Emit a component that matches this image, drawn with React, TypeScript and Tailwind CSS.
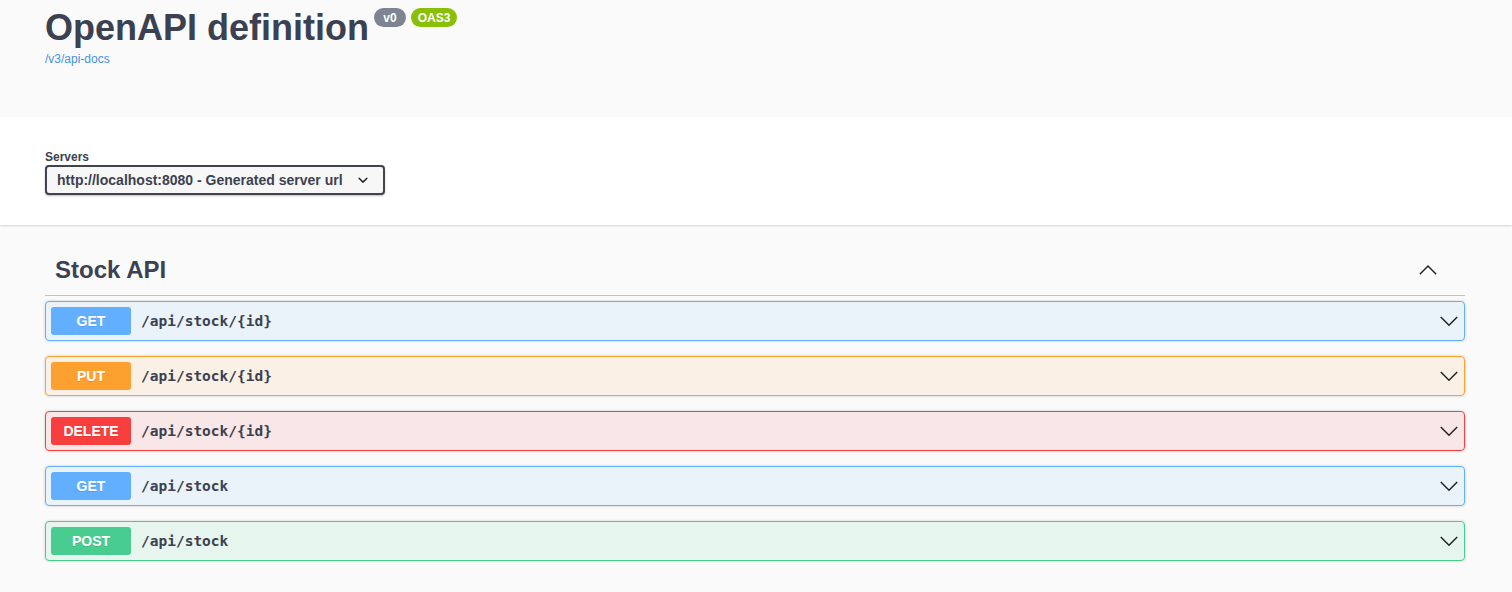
import React from "react";

const ops = [
  { m: "GET", p: "/api/stock/{id}", c: "#61affe", bg: "rgba(97,175,254,0.1)" },
  { m: "PUT", p: "/api/stock/{id}", c: "#fca130", bg: "rgba(252,161,48,0.1)" },
  { m: "DELETE", p: "/api/stock/{id}", c: "#f93e3e", bg: "rgba(249,62,62,0.1)" },
  { m: "GET", p: "/api/stock", c: "#61affe", bg: "rgba(97,175,254,0.1)" },
  { m: "POST", p: "/api/stock", c: "#49cc90", bg: "rgba(73,204,144,0.1)" },
];

function ArrowDown() {
  return (
    <svg width="20" height="20" viewBox="0 0 20 20" className="shrink-0">
      <polyline points="1.8,6 10,14.3 18.2,6" fill="none" stroke="#222" strokeWidth="1.5" />
    </svg>
  );
}

function ArrowUp() {
  return (
    <svg width="20" height="20" viewBox="0 0 20 20" className="shrink-0">
      <polyline points="1.8,14.3 10,6 18.2,14.3" fill="none" stroke="#222" strokeWidth="1.5" />
    </svg>
  );
}

export default function App() {
  const sans = { fontFamily: '"Liberation Sans", Arial, sans-serif' };
  return (
    <div className="min-h-[592px] bg-[#fafafa] text-[#3b4151]" style={sans}>
      {/* Info */}
      <div className="h-[117px] bg-[#fafafa]">
        <div className="ml-[25px] w-[1460px] px-5 pt-[8px]">
          <div className="flex items-start">
            <h2 className="m-0 text-[36px] font-bold leading-[40px] text-[#3b4151]">OpenAPI definition</h2>
            <span className="ml-[5px] flex h-[19px] w-[32px] items-center justify-center rounded-full bg-[#7d8492] text-[12px] font-bold text-white">
              v0
            </span>
            <span className="ml-[5px] flex h-[19px] w-[46px] items-center justify-center rounded-full bg-[#89bf04] text-[12px] font-bold text-white">
              OAS3
            </span>
          </div>
          <a className="mt-[4px] block text-[12px] leading-[14px] text-[#4990e2]">/v3/api-docs</a>
        </div>
      </div>

      {/* Servers */}
      <div className="bg-white pt-[33px] pb-[30px] shadow-[0_1px_2px_0_rgba(0,0,0,0.15)]">
        <div className="ml-[25px] w-[1460px] px-5">
          <div className="text-[12px] font-bold leading-[14px] text-[#3b4151]">Servers</div>
          <div className="mt-[1px] flex h-[30px] w-[340px] items-center justify-between rounded-[4px] border-2 border-[#41444e] bg-[#f7f7f7] pl-[10px] pr-[10px] shadow-[0_1px_2px_0_rgba(0,0,0,0.25)]">
            <span className="text-[14px] font-bold text-[#3b4151]">http://localhost:8080 - Generated server url</span>
            <svg width="20" height="20" viewBox="0 0 20 20">
              <path
                d="M13.418 7.859a.695.695 0 0 1 .978 0 .68.68 0 0 1 0 .969l-3.908 3.83a.697.697 0 0 1-.979 0l-3.908-3.830a.68.68 0 0 1 0-.969.695.695 0 0 1 .978 0L10 11l3.418-3.141z"
                fill="#222"
              />
            </svg>
          </div>
        </div>
      </div>

      {/* Operations */}
      <div className="ml-[25px] mt-[20px] w-[1460px] px-5">
        <div className="mb-[5px] flex h-[51px] items-center justify-between border-b border-[rgba(59,65,81,0.3)] pl-[10px]">
          <h3 className="m-0 text-[24px] font-bold text-[#3b4151]">Stock API</h3>
          <div className="mr-[27px]">
            <ArrowUp />
          </div>
        </div>
        {ops.map((o, i) => (
          <div
            key={i}
            className="mb-[15px] flex h-[40px] items-center rounded-[4px] border p-[5px] shadow-[0_0_3px_rgba(0,0,0,0.19)]"
            style={{ borderColor: o.c, background: o.bg }}
          >
            <div
              className="flex h-[28px] w-[80px] shrink-0 items-center justify-center rounded-[3px] text-[14px] font-bold text-white [text-shadow:0_1px_0_rgba(0,0,0,0.1)]"
              style={{ background: o.c }}
            >
              {o.m}
            </div>
            <span
              className="ml-[10px] flex-1 pt-[2px] text-[14.5px] font-bold text-[#3b4151]"
              style={{ fontFamily: '"DejaVu Sans Mono", monospace' }}
            >
              {o.p}
            </span>
            <ArrowDown />
          </div>
        ))}
      </div>
    </div>
  );
}
